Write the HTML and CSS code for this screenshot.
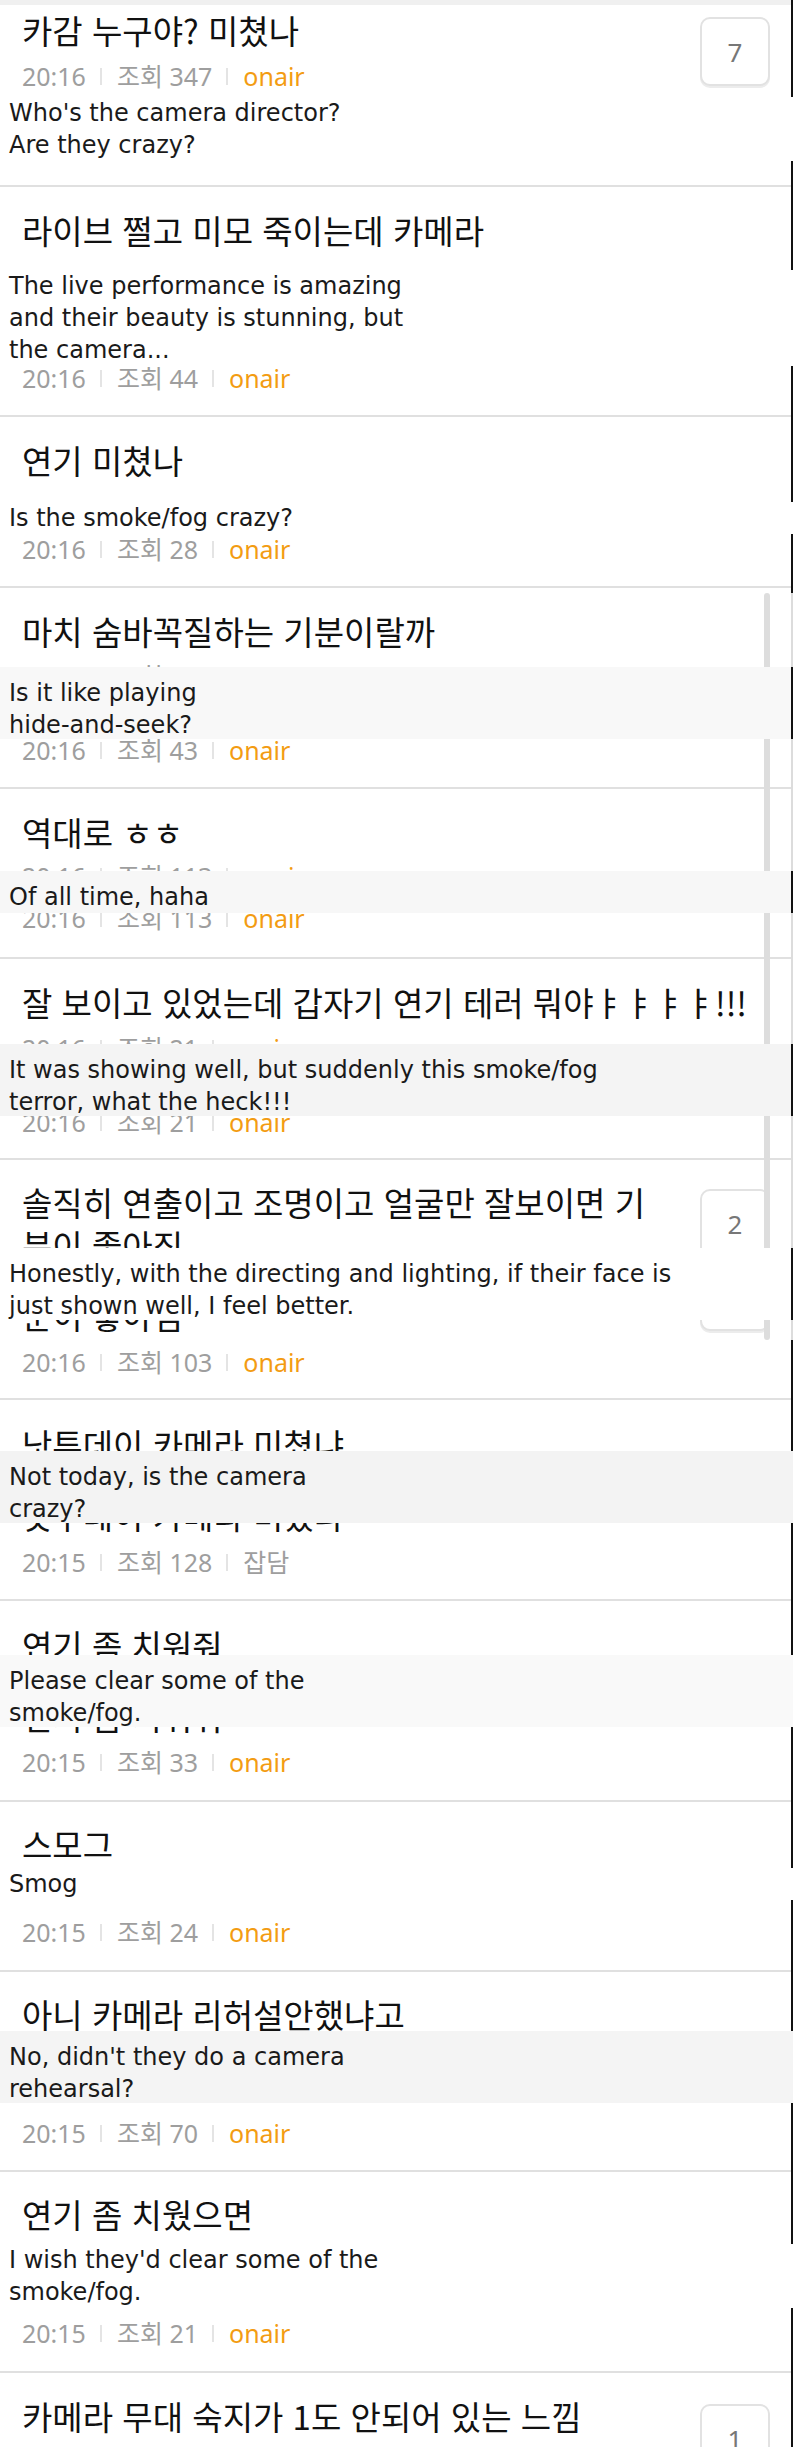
FILE: index.html
```html
<!DOCTYPE html>
<html lang="ko">
<head>
<meta charset="utf-8">
<title>onair</title>
<link rel="stylesheet" href="styles.css">
</head>
<body>
<div class="page">
  <div class="topband"></div>
  <div class="edge"></div>
  <div class="edge-track"></div>
  <div class="thumb"></div>
  <ul class="list">
    <li class="item item-first pb-24">
      <div class="row">
        <div class="main">
          <div class="title">카감 누구야? 미쳤나</div>
          <div class="meta mt-8"><span>20:16</span><i class="sep"></i><span>조회 347</span><i class="sep"></i><span class="cat">onair</span></div>
        </div>
        <div class="badge">7</div>
      </div>
      <div class="tr mt-5">Who's the camera director?<br>Are they crazy?</div>
    </li>

    <li class="item pb-21">
      <div class="title">라이브 쩔고 미모 죽이는데 카메라</div>
      <div class="tr mt-18">The live performance is amazing<br>and their beauty is stunning, but<br>the camera...</div>
      <div class="meta mt-n4"><span>20:16</span><i class="sep"></i><span>조회 44</span><i class="sep"></i><span class="cat">onair</span></div>
    </li>

    <li class="item pb-21">
      <div class="title">연기 미쳤나</div>
      <div class="tr mt-20">Is the smoke/fog crazy?</div>
      <div class="meta mt-n1"><span>20:16</span><i class="sep"></i><span>조회 28</span><i class="sep"></i><span class="cat">onair</span></div>
    </li>

    <li class="item pb-21">
      <div class="title">마치 숨바꼭질하는 기분이랄까</div>
      <div class="meta mt-7"><span>20:16</span><i class="sep"></i><span>조회 43</span><i class="sep"></i><span class="cat">onair</span></div>
      <div class="meta mt-42"><span>20:16</span><i class="sep"></i><span>조회 43</span><i class="sep"></i><span class="cat">onair</span></div>
      <div class="ov ov-2 ov-edge at-79 bg-f8">Is it like playing<br>hide-and-seek?</div>
    </li>

    <li class="item pb-23">
      <div class="title">역대로 ㅎㅎ</div>
      <div class="meta mt-6"><span>20:16</span><i class="sep"></i><span>조회 113</span><i class="sep"></i><span class="cat">onair</span></div>
      <div class="meta mt-10"><span>20:16</span><i class="sep"></i><span>조회 113</span><i class="sep"></i><span class="cat">onair</span></div>
      <div class="ov ov-1 ov-edge at-82 bg-f7">Of all time, haha</div>
    </li>

    <li class="item pb-20">
      <div class="title">잘 보이고 있었는데 갑자기 연기 테러 뭐야ㅑㅑㅑㅑ!!!</div>
      <div class="meta mt-8"><span>20:16</span><i class="sep"></i><span>조회 21</span><i class="sep"></i><span class="cat">onair</span></div>
      <div class="meta mt-42"><span>20:16</span><i class="sep"></i><span>조회 21</span><i class="sep"></i><span class="cat">onair</span></div>
      <div class="ov ov-2 ov-edge at-85 bg-f4">It was showing well, but suddenly this smoke/fog<br>terror, what the heck!!!</div>
    </li>

    <li class="item pb-20 pt-21">
      <div class="row">
        <div class="main">
          <div class="title">솔직히 연출이고 조명이고 얼굴만 잘보이면 기<br>분이 좋아짐</div>
          <div class="title mt-27">분이 좋아짐</div>
        </div>
        <div class="badge">2</div>
      </div>
      <div class="meta mt-9"><span>20:16</span><i class="sep"></i><span>조회 103</span><i class="sep"></i><span class="cat">onair</span></div>
      <div class="ov ov-2 ov-edge at-88 bg-ff">Honestly, with the directing and lighting, if their face is<br>just shown well, I feel better.</div>
    </li>

    <li class="item pb-21 pt-23">
      <div class="title">낫투데이 카메라 미쳤냐</div>
      <div class="title mt-28">낫투데이 카메라 미쳤냐</div>
      <div class="meta mt-9"><span>20:15</span><i class="sep"></i><span>조회 128</span><i class="sep"></i><span>잡담</span></div>
      <div class="ov ov-2 at-51 bg-f3">Not today, is the camera<br>crazy?</div>
    </li>

    <li class="item pb-22 pt-23">
      <div class="title">연기 좀 치워줘</div>
      <div class="title mt-28">연기 좀 치워줘</div>
      <div class="meta mt-8"><span>20:15</span><i class="sep"></i><span>조회 33</span><i class="sep"></i><span class="cat">onair</span></div>
      <div class="ov ov-2 at-54 bg-f9">Please clear some of the<br>smoke/fog.</div>
    </li>

    <li class="item pb-22 pt-21">
      <div class="title">스모그</div>
      <div class="tr mt-2">Smog</div>
      <div class="meta mt-16"><span>20:15</span><i class="sep"></i><span>조회 24</span><i class="sep"></i><span class="cat">onair</span></div>
    </li>

    <li class="item pb-21 pt-21">
      <div class="title">아니 카메라 리허설안했냐고</div>
      <div class="title mt-28">아니 카메라 리허설안했냐고</div>
      <div class="meta mt-10"><span>20:15</span><i class="sep"></i><span>조회 70</span><i class="sep"></i><span class="cat">onair</span></div>
      <div class="ov ov-2 at-59 bg-f4">No, didn't they do a camera<br>rehearsal?</div>
    </li>

    <li class="item pb-22 pt-21">
      <div class="title">연기 좀 치웠으면</div>
      <div class="tr mt-8">I wish they'd clear some of the<br>smoke/fog.</div>
      <div class="meta mt-9"><span>20:15</span><i class="sep"></i><span>조회 21</span><i class="sep"></i><span class="cat">onair</span></div>
    </li>

    <li class="item item-last">
      <div class="row">
        <div class="main">
          <div class="title">카메라 무대 숙지가 1도 안되어 있는 느낌</div>
        </div>
        <div class="badge badge-tall">1</div>
      </div>
    </li>
  </ul>
</div>
</body>
</html>
```

FILE: styles.css
```css
html, body {
  margin: 0;
  padding: 0;
  background: #ffffff;
}

.page {
  position: relative;
  width: 793px;
  height: 2447px;
  overflow: hidden;
  font-family: "Noto Sans", "Noto Sans CJK KR", sans-serif;
  color: #111111;
}

.topband {
  height: 5px;
  background: #f0f0f0;
}

/* thin dark frame edge on the right side of the viewport */
.edge {
  position: absolute;
  top: 0;
  bottom: 0;
  right: 0;
  width: 2px;
  background: #111111;
  z-index: 1;
}

/* outer scroll track segment next to the inner scroll area */
.edge-track {
  position: absolute;
  top: 593px;
  right: 0;
  width: 2px;
  height: 747px;
  background: #dcdcdc;
  z-index: 1;
}

.thumb {
  position: absolute;
  left: 764px;
  top: 593px;
  width: 6px;
  height: 747px;
  border-radius: 3px;
  background: #dddddd;
  z-index: 1;
}

.list {
  list-style: none;
  margin: 0;
  padding: 0;
}

.item {
  position: relative;
  padding-top: 22px;
  border-bottom: 2px solid #e0e0e0;
}

.item-first {
  padding-top: 4px;
}

.item-last {
  border-bottom: 0;
}

.row {
  display: flex;
  align-items: stretch;
}

.main {
  flex: 1;
  min-width: 0;
}

.badge {
  flex: none;
  box-sizing: border-box;
  width: 70px;
  margin: 8px 23px 6px 20px;
  padding-top: 17px;
  border: 2px solid #e2e2e2;
  border-radius: 10px;
  box-shadow: 0 2px 0 #ececec;
  text-align: center;
  font-family: "Noto Sans", sans-serif;
  font-size: 26px;
  line-height: 32px;
  color: #777777;
  background: #ffffff;
}

.badge-tall {
  min-height: 69px;
  margin-top: 9px;
}

.title {
  padding-left: 22px;
  font-family: "Noto Sans CJK KR", "Noto Sans", sans-serif;
  font-size: 33px;
  line-height: 43px;
  color: #111111;
  white-space: nowrap;
}

.meta {
  display: flex;
  align-items: center;
  padding-left: 22px;
  font-family: "Noto Sans", "Noto Sans CJK KR", sans-serif;
  font-size: 25px;
  line-height: 32px;
  color: #9e9e9e;
  white-space: nowrap;
}

.meta .cat {
  color: #f39c12;
}

.sep {
  display: inline-block;
  width: 2px;
  height: 17px;
  margin: 0 15px 0 14px;
  background: #e4e4e4;
}

.tr {
  position: relative;
  z-index: 2;
  padding-left: 9px;
  font-family: "DejaVu Sans", sans-serif;
  font-size: 24px;
  line-height: 32px;
  color: #1a1a1a;
  background: #ffffff;
}

.ov {
  position: absolute;
  left: 0;
  right: 0;
  box-sizing: border-box;
  padding: 10px 9px 0;
  font-family: "DejaVu Sans", sans-serif;
  font-size: 24px;
  line-height: 32px;
  color: #1a1a1a;
  z-index: 2;
}

.ov-edge {
  border-right: 2px solid #111111;
}

.ov-1 { height: 42px; }
.ov-2 { height: 72px; }

.at-51 { top: 51px; }
.at-54 { top: 54px; }
.at-59 { top: 59px; }
.at-79 { top: 79px; }
.at-82 { top: 82px; }
.at-85 { top: 85px; }
.at-88 { top: 88px; }

.bg-ff { background: #ffffff; }
.bg-f9 { background: #f9f9f9; }
.bg-f8 { background: #f8f8f8; }
.bg-f7 { background: #f7f7f7; }
.bg-f4 { background: #f4f4f4; }
.bg-f3 { background: #f3f3f3; }

.pt-21 { padding-top: 21px; }
.pt-23 { padding-top: 23px; }

.pb-20 { padding-bottom: 20px; }
.pb-21 { padding-bottom: 21px; }
.pb-22 { padding-bottom: 22px; }
.pb-23 { padding-bottom: 23px; }
.pb-24 { padding-bottom: 24px; }

.mt-n4 { margin-top: -4px; }
.mt-n1 { margin-top: -1px; }
.mt-2 { margin-top: 2px; }
.mt-5 { margin-top: 5px; }
.mt-6 { margin-top: 6px; }
.mt-7 { margin-top: 7px; }
.mt-8 { margin-top: 8px; }
.mt-9 { margin-top: 9px; }
.mt-10 { margin-top: 10px; }
.mt-16 { margin-top: 16px; }
.mt-18 { margin-top: 18px; }
.mt-20 { margin-top: 20px; }
.mt-27 { margin-top: 27px; }
.mt-28 { margin-top: 28px; }
.mt-42 { margin-top: 42px; }
```
